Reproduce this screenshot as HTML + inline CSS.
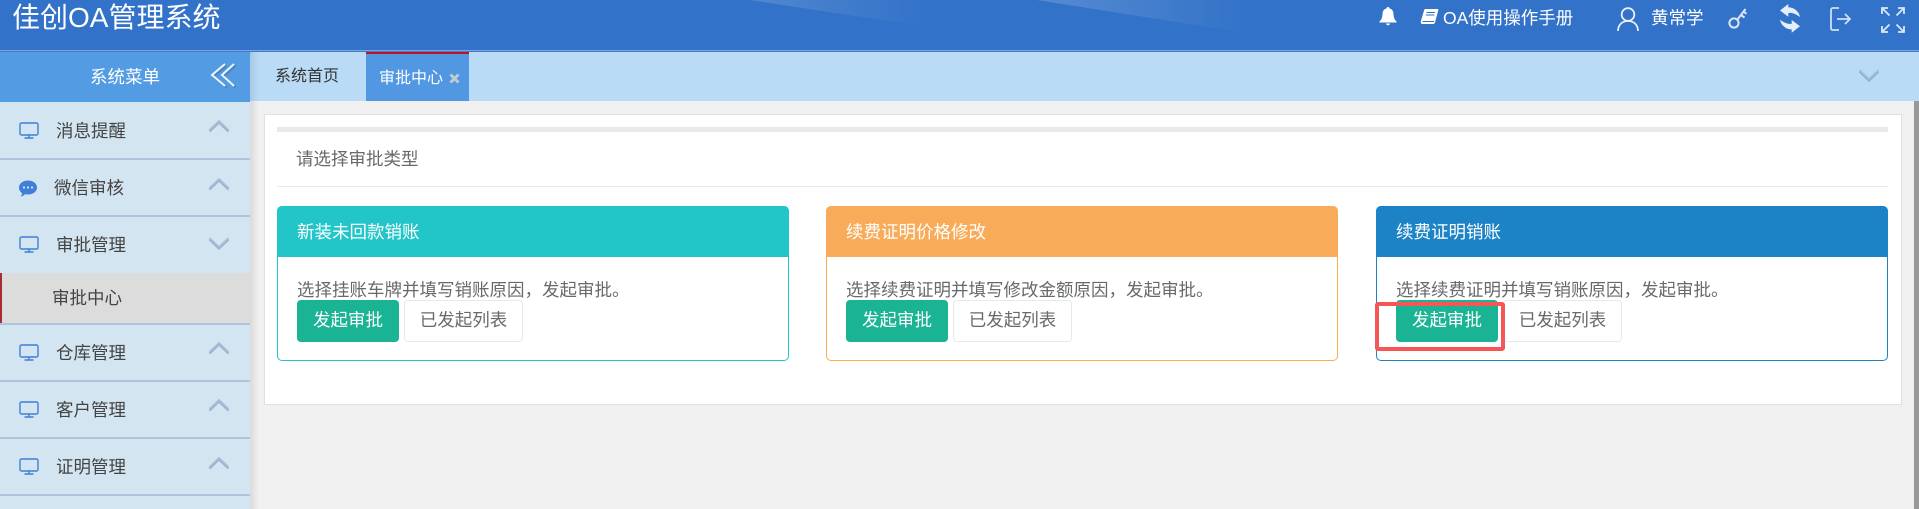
<!DOCTYPE html>
<html lang="zh-CN">
<head>
<meta charset="utf-8">
<title>佳创OA管理系统</title>
<style>
html,body{margin:0;padding:0;width:1919px;height:509px;overflow:hidden;background:#f0f0f0}
body{position:relative;font-family:"Liberation Sans","Noto Sans CJK SC",sans-serif;font-size:17.5px;color:#676a6c}
.a{position:absolute}
.t{position:absolute;white-space:nowrap;line-height:26px;height:26px}
.line{position:absolute;left:0;width:250px;height:2px;background:#aec4dc}
.card{position:absolute;top:206px;width:510px;height:153px;background:#fff;border:1px solid;border-radius:5px;box-sizing:content-box}
.head{position:absolute;left:-1px;top:-1px;width:512px;height:51px;border-radius:5px 5px 0 0;color:#fff}
.head span{position:absolute;left:20px;top:13px;line-height:26px;white-space:nowrap}
.desc{position:absolute;left:19px;top:70px;line-height:26px;white-space:nowrap}
.b1{position:absolute;left:19px;top:93px;width:102px;height:42px;background:#1ab394;border-radius:4px;color:#fff;text-align:center;line-height:40px}
.b2{position:absolute;left:126px;top:93px;width:119px;height:42px;box-sizing:border-box;background:#fff;border:1px solid #e7eaec;border-radius:4px;color:#676a6c;text-align:center;line-height:38px}
</style>
</head>
<body>
<!-- header -->
<div class="a" style="left:0;top:0;width:1919px;height:50px;background:#3272c8"></div>
<svg class="a" style="left:0;top:0" width="1919" height="50">
<defs>
<linearGradient id="s1" gradientUnits="userSpaceOnUse" x1="750" y1="0" x2="930" y2="0"><stop offset="0" stop-color="#fff" stop-opacity=".15"/><stop offset="1" stop-color="#fff" stop-opacity="0"/></linearGradient>
<linearGradient id="s2" gradientUnits="userSpaceOnUse" x1="1037" y1="0" x2="1250" y2="0"><stop offset="0" stop-color="#fff" stop-opacity=".18"/><stop offset="1" stop-color="#fff" stop-opacity="0"/></linearGradient>
</defs>
<polygon points="750,0 1000,0 1000,38" fill="url(#s1)"/>
<polygon points="1037,0 1340,0 1340,48" fill="url(#s2)"/>
</svg>
<div class="a" style="left:0;top:50px;width:1919px;height:1px;background:#7ba5dc"></div>
<div class="a" style="left:0;top:51px;width:1919px;height:1px;background:#4279c8"></div>
<div class="t" style="left:12px;top:-2px;font-size:28px;line-height:40px;height:40px;color:#fff">佳创OA管理系统</div>

<svg class="a" style="left:1378px;top:6px" width="20" height="20" viewBox="0 0 20 20"><path fill="#fff" d="M10 1c1 0 1.400.7 1.400 1.400C14 3 15.400 5 15.500 8c.1 3.500 1 5.500 3 7.500V16.500H1.500V15.500c2-2 2.900-4 3-7.500C4.600 5 6 3 8.600 2.400 8.600 1.700 9 1 10 1zM8 17.500h4c0 1-1 1.800-2 1.800s-2-.8-2-1.800z"/></svg>
<svg class="a" style="left:1420px;top:8px" width="19" height="18" viewBox="0 0 19 18"><path fill="#fff" d="M5.500 1H17.500c.8 0 1 .6.800 1.300L15 14.500c-.3 1-.9 1.500-1.900 1.500H2.500C1.300 16 .4 15 .8 13.500L4 2.500C4.200 1.600 4.700 1 5.500 1z"/><path stroke="#3272c8" stroke-width="1.100" fill="none" d="M6.500 4.500h8.500M5.800 7h8.500M2.500 13.500h11.500"/></svg>
<div class="t" style="left:1443px;top:5px;color:#fff">OA使用操作手册</div>

<svg class="a" style="left:1616px;top:6px" width="24" height="26" viewBox="0 0 24 26" fill="none" stroke="#e8f0fb" stroke-width="1.800"><circle cx="12" cy="8.500" r="6.300"/><path d="M2 25c0-6 4-10 10-10s10 4 10 10"/></svg>
<div class="t" style="left:1651px;top:5px;color:#fff">黄常学</div>

<svg class="a" style="left:1727px;top:6px" width="22" height="24" viewBox="0 0 22 24" fill="none" stroke="#dbe7f7" stroke-width="2"><circle cx="7" cy="17" r="4.600"/><path d="M10.500 13.500L18.500 3M14 9l3.500 2.500M16.500 5.500l3 2.300"/></svg>
<svg class="a" style="left:1778px;top:3px" width="24" height="32" viewBox="0 0 24 32"><g fill="#e4eefa"><path d="M10.300 1L2 7.500l8.300 6.200V10C14 9.500 17 10.500 22 14C21 8.500 16 4.300 10.300 4.300z"/><path transform="rotate(180 12 15.350)" d="M10.300 1L2 7.500l8.300 6.200V10C14 9.500 17 10.500 22 14C21 8.500 16 4.300 10.300 4.300z"/></g></svg>
<svg class="a" style="left:1829px;top:6px" width="23" height="26" viewBox="0 0 23 26" fill="none" stroke="#cfdff4" stroke-width="1.800"><path d="M10 2H4C2.500 2 2 2.800 2 4V22c0 1.200.5 2 2 2H10"/><path d="M8 13H21M16 8l5 5-5 5"/></svg>
<svg class="a" style="left:1880px;top:6px" width="26" height="28" viewBox="0 0 26 28" fill="none" stroke="#dbe7f7" stroke-width="1.800"><path d="M2 8V2H8M2 2l7.500 7.500M24 8V2H18M24 2l-7.500 7.500M2 20v6H8M2 26l7.500-7.500M24 20v6H18M24 26l-7.500-7.500"/></svg>

<!-- sidebar -->
<div class="a" style="left:0;top:102px;width:250px;height:407px;background:#d3e5f0"></div>
<div class="a" style="left:0;top:52px;width:250px;height:50px;background:#539be3"></div>
<div class="t" style="left:90px;top:64px;color:#fff">系统菜单</div>
<svg class="a" style="left:208px;top:60px" width="32" height="32" viewBox="0 0 32 32" fill="none"><g stroke="#3f6fa8" stroke-width="2.200" opacity=".55" transform="translate(1.500 1.500)"><path d="M17 4L4 15l13 11M26 4L14 15l12 11"/></g><g stroke="#eef5fc" stroke-width="2"><path d="M17 4L4 15l13 11M26 4L14 15l12 11"/></g></svg>

<div class="line" style="top:158px"></div>
<div class="line" style="top:215px"></div>
<div class="a" style="left:0;top:273px;width:250px;height:50px;background:#dcdcdc"></div>
<div class="a" style="left:0;top:273px;width:2px;height:50px;background:#a92c35"></div>
<div class="line" style="top:323px"></div>
<div class="line" style="top:380px"></div>
<div class="line" style="top:437px"></div>
<div class="line" style="top:494px"></div>

<div class="t" style="left:56px;top:118px;color:#444">消息提醒</div>
<div class="t" style="left:54px;top:175px;color:#444">微信审核</div>
<div class="t" style="left:56px;top:232px;color:#444">审批管理</div>
<div class="t" style="left:52px;top:285px;color:#444">审批中心</div>
<div class="t" style="left:56px;top:340px;color:#444">仓库管理</div>
<div class="t" style="left:56px;top:397px;color:#444">客户管理</div>
<div class="t" style="left:56px;top:454px;color:#444">证明管理</div>

<svg width="0" height="0" style="position:absolute">
<defs>
<g id="mon" fill="none" stroke="#3f7fd6" stroke-width="1.400"><rect x="1" y="1" width="18" height="12" rx="1.500"/><path d="M10 13v2.500M5.500 16h9"/></g>
<g id="up" fill="none"><path d="M1.500 13L11 4l9.500 9" stroke="#4f72a8" stroke-width="2.200" opacity=".45" transform="translate(0 1.500)"/><path d="M1.500 13L11 4l9.500 9" stroke="#a9bdd6" stroke-width="1.800"/></g>
<g id="down" fill="none"><path d="M1.500 4L11 13l9.500-9" stroke="#4f72a8" stroke-width="2.200" opacity=".45" transform="translate(0 1.500)"/><path d="M1.500 4L11 13l9.500-9" stroke="#a9bdd6" stroke-width="1.800"/></g>
<filter id="bl"><feGaussianBlur stdDeviation=".35"/></filter>
</defs>
</svg>
<svg class="a" style="left:19px;top:122px" width="20" height="18"><use href="#mon"/></svg>
<svg class="a" style="left:19px;top:236px" width="20" height="18"><use href="#mon"/></svg>
<svg class="a" style="left:19px;top:344px" width="20" height="18"><use href="#mon"/></svg>
<svg class="a" style="left:19px;top:401px" width="20" height="18"><use href="#mon"/></svg>
<svg class="a" style="left:19px;top:458px" width="20" height="18"><use href="#mon"/></svg>
<svg class="a" style="left:18px;top:180px" width="20" height="17" viewBox="0 0 20 17"><path fill="#3f7fd6" d="M10 .5c5 0 9 3 9 7s-4 7-9 7c-1 0-2-.1-2.900-.4C6 15.300 4.500 16.300 2.500 16.500c1-1 1.500-2 1.600-3.300C2.300 12 1 10 1 7.500c0-4 4-7 9-7z"/><g fill="#d3e5f0"><circle cx="6" cy="7.500" r="1.100"/><circle cx="10" cy="7.500" r="1.100"/><circle cx="14" cy="7.500" r="1.100"/></g></svg>

<svg class="a" style="left:208px;top:117px" width="22" height="18" filter="url(#bl)"><use href="#up"/></svg>
<svg class="a" style="left:208px;top:175px" width="22" height="18" filter="url(#bl)"><use href="#up"/></svg>
<svg class="a" style="left:208px;top:234px" width="22" height="18" filter="url(#bl)"><use href="#down"/></svg>
<svg class="a" style="left:208px;top:339px" width="22" height="18" filter="url(#bl)"><use href="#up"/></svg>
<svg class="a" style="left:208px;top:396px" width="22" height="18" filter="url(#bl)"><use href="#up"/></svg>
<svg class="a" style="left:208px;top:454px" width="22" height="18" filter="url(#bl)"><use href="#up"/></svg>

<!-- tabs -->
<div class="a" style="left:250px;top:52px;width:1669px;height:49px;background:#b9dbf6"></div>
<div class="t" style="left:275px;top:64px;font-size:16px;color:#333">系统首页</div>
<div class="a" style="left:366px;top:52px;width:103px;height:49px;background:#5297e1"></div>
<div class="a" style="left:366px;top:52px;width:103px;height:2px;background:#c0102a"></div>
<div class="t" style="left:379px;top:66px;font-size:16px;color:#fff">审批中心</div>
<svg class="a" style="left:449px;top:73px" width="11" height="11" viewBox="0 0 11 11"><path d="M1.500 1.500l8 8M9.500 1.500l-8 8" stroke="#c3cbd3" stroke-width="3"/></svg>
<svg class="a" style="left:1857px;top:65px" width="24" height="20" filter="url(#bl)"><use href="#down" x="1" y="1"/></svg>

<!-- sidebar shadow -->
<div class="a" style="left:250px;top:52px;width:9px;height:457px;background:linear-gradient(to right,rgba(0,0,0,.09),rgba(0,0,0,0))"></div>

<!-- scrollbar -->
<div class="a" style="left:1914px;top:101px;width:5px;height:408px;background:#999"></div>

<!-- panel -->
<div class="a" style="left:264px;top:114px;width:1638px;height:291px;box-sizing:border-box;background:#fff;border:1px solid #e0e0e0"></div>
<div class="a" style="left:277px;top:127px;width:1611px;height:5px;background:#e7eaec"></div>
<div class="t" style="left:296px;top:146px;color:#676a6c">请选择审批类型</div>
<div class="a" style="left:277px;top:186px;width:1611px;height:1px;background:#e7eaec"></div>

<div class="card" style="left:277px;border-color:#23c6c8">
  <div class="head" style="background:#23c6c8"><span>新装未回款销账</span></div>
  <div class="desc">选择挂账车牌并填写销账原因，发起审批。</div>
  <div class="b1">发起审批</div><div class="b2">已发起列表</div>
</div>
<div class="card" style="left:826px;border-color:#f8ac59">
  <div class="head" style="background:#f8ac59"><span>续费证明价格修改</span></div>
  <div class="desc">选择续费证明并填写修改金额原因，发起审批。</div>
  <div class="b1">发起审批</div><div class="b2">已发起列表</div>
</div>
<div class="card" style="left:1376px;border-color:#1c84c6">
  <div class="head" style="background:#1c84c6"><span>续费证明销账</span></div>
  <div class="desc">选择续费证明并填写销账原因，发起审批。</div>
  <div class="b1">发起审批</div><div class="b2">已发起列表</div>
</div>

<!-- red annotation -->
<div class="a" style="left:1375px;top:302px;width:130px;height:49px;box-sizing:border-box;border:4px solid #f55656;border-radius:3px"></div>
</body>
</html>
